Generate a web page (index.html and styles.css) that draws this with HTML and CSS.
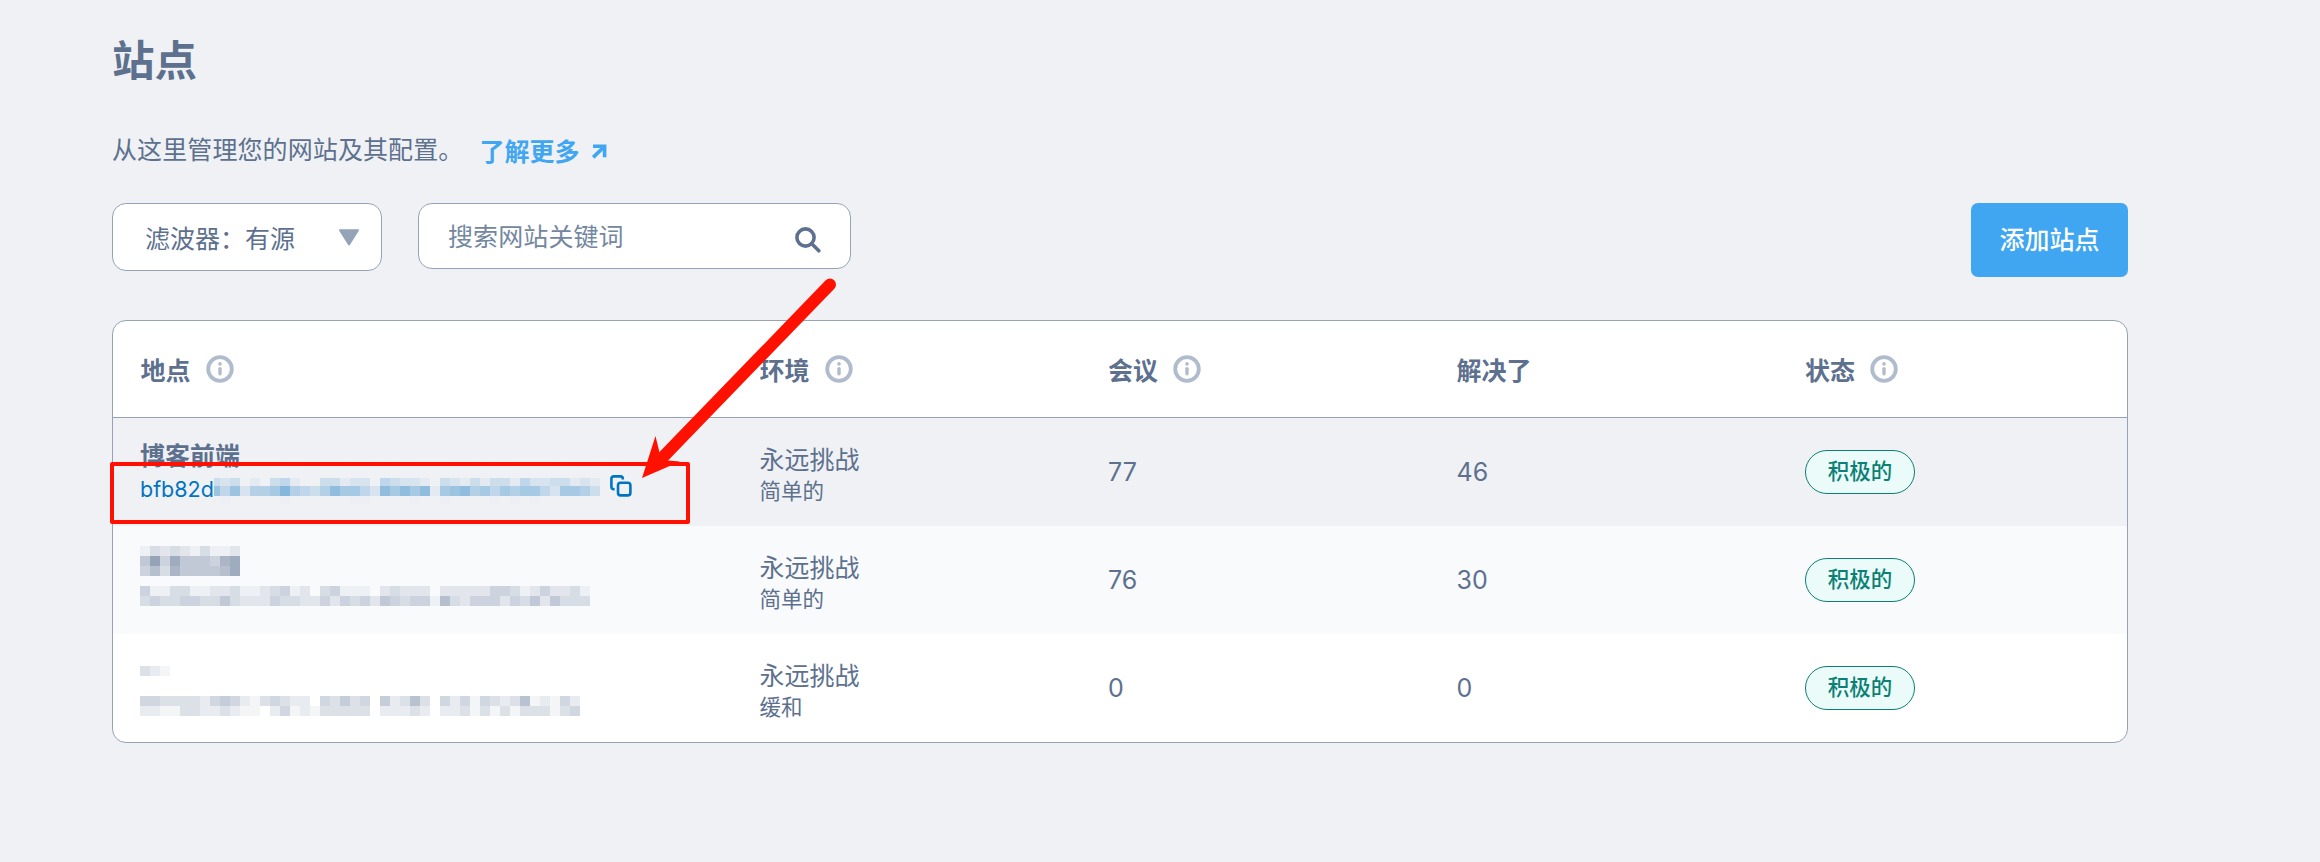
FILE: index.html
```html
<!DOCTYPE html>
<html lang="zh-CN">
<head>
<meta charset="utf-8">
<title>站点</title>
<link rel="stylesheet" href="styles.css">
</head>
<body>
<svg class="defs" width="0" height="0" aria-hidden="true">
  <symbol id="info" viewBox="0 0 28 28">
    <circle cx="14" cy="14" r="11.8" fill="none" stroke="currentColor" stroke-width="3.8"/>
    <circle cx="14" cy="8.9" r="1.8" fill="currentColor"/>
    <path d="M14 13.6v5.2" fill="none" stroke="currentColor" stroke-width="3.4" stroke-linecap="round"/>
  </symbol>
</svg>
<main class="page">
  <h1 class="title">站点</h1>
  <p class="intro">
    <span>从这里管理您的网站及其配置。</span>
    <a class="more" href="#">了解更多
      <svg class="more-icon" viewBox="0 0 16 16"><path d="M2 2.2H13.6V13.2M13 2.8L2.2 13.4" fill="none" stroke="currentColor" stroke-width="3.6"/></svg>
    </a>
  </p>
  <div class="toolbar">
    <div class="filter"><span>滤波器：有源</span>
      <svg class="caret" viewBox="0 0 22 17"><path d="M2 1.2H20L11 15.4Z" fill="currentColor" stroke="currentColor" stroke-width="2" stroke-linejoin="round"/></svg>
    </div>
    <div class="search"><span>搜索网站关键词</span>
      <svg class="search-icon" viewBox="0 0 26 26"><circle cx="10.5" cy="10.5" r="8.6" fill="none" stroke="currentColor" stroke-width="3.6"/><path d="M17 17l6.8 6.8" fill="none" stroke="currentColor" stroke-width="3.6" stroke-linecap="round"/></svg>
    </div>
    <button class="add">添加站点</button>
  </div>
  <section class="table">
    <div class="row head">
      <div class="cell"><span>地点</span><svg class="info"><use href="#info"/></svg></div>
      <div class="cell"><span>环境</span><svg class="info"><use href="#info"/></svg></div>
      <div class="cell"><span>会议</span><svg class="info"><use href="#info"/></svg></div>
      <div class="cell"><span>解决了</span></div>
      <div class="cell"><span>状态</span><svg class="info"><use href="#info"/></svg></div>
    </div>
    <div class="row active">
      <div class="cell site">
        <div class="name">博客前端</div>
        <div class="id"><span class="id-text">bfb82d</span><svg class="mosaic blue" data-first="6" data-heights="8,10,8" data-rows="323010341003312204322103213133142233121|747255695435866428686816785646566426653|010000010000001100001001000010101000000"></svg>
          <svg class="copy" viewBox="0 0 22 22"><path d="M4.6 14.2H3.8Q1.4 14.2 1.4 11.8V3.8Q1.4 1.4 3.8 1.4H10.4Q12.8 1.4 12.8 3.8V4.6" fill="none" stroke="currentColor" stroke-width="2.6"/><rect x="8" y="7.8" width="12.4" height="12.6" rx="2.6" fill="none" stroke="currentColor" stroke-width="2.6"/></svg>
        </div>
      </div>
      <div class="cell env"><span>永远挑战</span><small>简单的</small></div>
      <div class="cell">77</div>
      <div class="cell">46</div>
      <div class="cell"><span class="badge">积极的</span></div>
    </div>
    <div class="row alt">
      <div class="cell masked">
        <svg class="mosaic" data-rows="1323213112|5948555478|4637555568"></svg>
        <svg class="mosaic mosaic-id" data-rows="411331122311234120341110232220222224431242231|343344335322243322424342543441632444243525333"></svg>
      </div>
      <div class="cell env"><span>永远挑战</span><small>简单的</small></div>
      <div class="cell">76</div>
      <div class="cell">30</div>
      <div class="cell"><span class="badge">积极的</span></div>
    </div>
    <div class="row">
      <div class="cell masked last">
        <svg class="mosaic" data-rows="321"></svg>
        <svg class="mosaic mosaic-id" data-rows="44333324542134322043534052363042414323612142|22113322321102412133333022232022313131333134"></svg>
      </div>
      <div class="cell env"><span>永远挑战</span><small>缓和</small></div>
      <div class="cell">0</div>
      <div class="cell">0</div>
      <div class="cell"><span class="badge">积极的</span></div>
    </div>
  </section>
</main>
<svg class="annotation" viewBox="0 0 2320 862">
  <rect x="112" y="464" width="576" height="58" fill="none" stroke="#ff1100" stroke-width="4" stroke-linejoin="round"/>
  <path d="M830 284.500L664 456" stroke="#ff1100" stroke-width="12" stroke-linecap="round"/>
  <path d="M642 478L655.500 436L659.500 452.500L668 460.500L680 461.500Z" fill="#ff1100"/>
</svg>
<script src="mosaic.js"></script>
</body>
</html>
```

FILE: styles.css
```css
* { box-sizing: border-box; }
body {
  margin: 0;
  min-height: 862px;
  background: #f0f1f5;
  color: #5d718f;
  font-family: Inter, "Noto Sans CJK SC", sans-serif;
  font-size: 25px;
}
.defs { position: absolute; }
.page { width: 2128px; padding: 36px 0 0 112px; }
.title { margin: 0; font-size: 42.5px; font-weight: 600; line-height: 50px; }
.intro {
  display: flex;
  align-items: center;
  gap: 16px;
  height: 36px;
  margin: 46px 0 0;
  line-height: 36px;
}
.intro span { letter-spacing: 0.1px; }
.more {
  display: flex;
  align-items: center;
  gap: 12px;
  padding-top: 3px;
  color: #40a6f1;
  font-weight: 600;
  text-decoration: none;
}
.more-icon { width: 16px; height: 16px; }
.toolbar { display: flex; align-items: flex-start; height: 74px; margin-top: 35px; }
.filter, .search {
  display: flex;
  align-items: center;
  justify-content: space-between;
  border: 1px solid #94a3b8;
  border-radius: 14px;
  background: #fff;
}
.filter { width: 270px; height: 68px; padding: 0 21px 0 32px; }
.filter span { padding-bottom: 1px; }
.search { width: 433px; height: 66px; margin-left: 36px; padding: 0 29px; color: #74879f; }
.search span { padding-bottom: 2px; letter-spacing: 0.1px; }
.caret { width: 22px; height: 17px; color: #94a3b8; }
.search-icon { width: 26px; height: 26px; margin-top: 7px; color: #5d718f; }
.add {
  width: 157px;
  height: 74px;
  margin-left: auto;
  padding: 0;
  border: 0;
  border-radius: 7px;
  background: #40a6f1;
  color: #fff;
  font: 500 25px/74px Inter, "Noto Sans CJK SC", sans-serif;
}
.table {
  margin-top: 43px;
  border: 1px solid #94a3b8;
  border-radius: 14px;
  background: #fff;
  overflow: hidden;
}
.row { display: grid; grid-template-columns: 619px 348.5px 348.5px 348.5px 1fr; height: 108px; }
.head { height: 97px; border-bottom: 1px solid #94a3b8; font-weight: 600; }
.head span { padding-bottom: 1px; }
.active { background: #f0f1f5; }
.alt { background: #f9fafc; }
.cell { display: flex; align-items: center; padding-left: 27.5px; }
.info { width: 28px; height: 28px; margin-left: 15px; color: #b0bccd; }
.site { flex-direction: column; align-items: flex-start; padding: 20px 0 0 27px; }
.name { height: 36px; font-weight: 600; line-height: 36px; }
.id { display: flex; align-items: flex-start; height: 36px; color: #0074c2; font-size: 21.5px; }
.id-text { width: 74px; line-height: 30px; white-space: nowrap; }
.mosaic { display: block; color: #52688a; }
.blue { margin-top: 4px; color: #0070bc; }
.copy { width: 22px; height: 22px; margin: 1px 0 0 10px; }
.env { flex-direction: column; align-items: flex-start; padding-top: 26px; }
.env span { line-height: 33px; }
.env small { font-size: 21.5px; line-height: 28px; }
.badge {
  width: 110px;
  height: 44px;
  border: 1px solid #0b8074;
  border-radius: 22px;
  background: #eafbfa;
  color: #0b8074;
  font-size: 21.5px;
  font-weight: 500;
  line-height: 41px;
  text-align: center;
}
.masked { flex-direction: column; align-items: flex-start; padding: 20px 0 0 27px; }
.mosaic-id { margin-top: 10px; }
.last { padding-top: 32px; }
.last .mosaic-id { margin-top: 20px; }
.annotation { position: absolute; top: 0; left: 0; width: 2320px; height: 862px; pointer-events: none; }
```

FILE: mosaic.js
```js
// Draws pixelated masks; each digit is the strength of one cell.
document.querySelectorAll('.mosaic').forEach(function (svg) {
  var rows = svg.dataset.rows.split('|');
  var heights = (svg.dataset.heights || '').split(',').map(Number);
  var first = Number(svg.dataset.first || 10);
  var step = svg.classList.contains('blue') ? 0.05 : 0.067;
  var y = 0, width = 0;
  rows.forEach(function (row, r) {
    var x = 0, h = heights[r] || 10;
    row.split('').forEach(function (level, c) {
      var w = c === 0 ? first : 10;
      var cell = document.createElementNS('http://www.w3.org/2000/svg', 'rect');
      cell.setAttribute('x', x);
      cell.setAttribute('y', y);
      cell.setAttribute('width', w);
      cell.setAttribute('height', h);
      cell.setAttribute('fill', 'currentColor');
      cell.setAttribute('fill-opacity', (r === 2 && first === 6 ? 0.01 : step) * level);
      svg.appendChild(cell);
      x += w;
    });
    width = Math.max(width, x);
    y += h;
  });
  svg.setAttribute('width', width);
  svg.setAttribute('height', y);
  svg.setAttribute('shape-rendering', 'crispEdges');
});
```
